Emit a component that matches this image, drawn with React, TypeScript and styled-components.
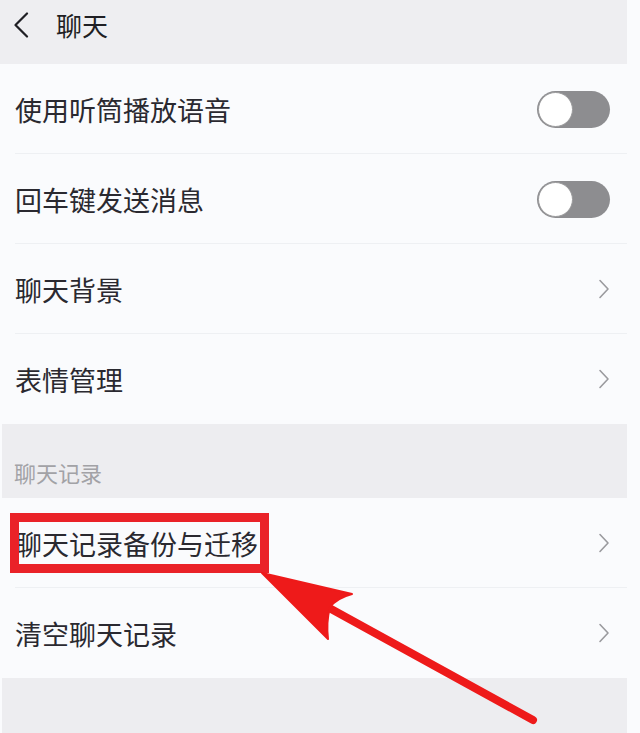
import React from "react";
import styled, {createGlobalStyle} from "styled-components";

const GlobalStyle = createGlobalStyle`
  html, body {
    margin: 0;
    padding: 0;
    background: #fafbfd;
  }
  body {
    font-family: "Noto Sans CJK SC", "Noto Sans", sans-serif;
  }
`;

const Page = styled.div`
  position: relative;
  width: 640px;
  height: 733px;
  overflow: hidden;
  background: #fafbfd;
`;

const Screen = styled.div`
  width: 627px;
  height: 733px;
  display: flex;
  flex-direction: column;
`;

const Header = styled.div`
  height: 64px;
  flex-shrink: 0;
  box-sizing: border-box;
  display: flex;
  align-items: center;
  background: #eeeef1;
  padding: 0 0 14px 13px;
  gap: 27px;
`;

const Title = styled.span`
  font-size: 26px;
  color: #1f1f24;
  line-height: 1;
`;

const Row = styled.div<{ $last?: boolean }>`
  position: relative;
  height: 90px;
  flex-shrink: 0;
  display: flex;
  align-items: center;
  justify-content: space-between;
  padding: 0 17px 0 15px;
  background: #fafbfd;
  &::after {
    content: "";
    display: ${p => (p.$last ? "none" : "block")};
    position: absolute;
    left: 15px;
    right: 0;
    bottom: 0;
    height: 1px;
    background: #eef0f3;
  }
`;

const Label = styled.span`
  font-size: 27px;
  color: #2a2930;
  line-height: 1;
`;

const Section = styled.div`
  height: 74px;
  flex-shrink: 0;
  display: flex;
  align-items: flex-end;
  padding: 0 0 15px 12px;
  background: #ededf0;
  box-sizing: border-box;
  margin-left: 2px;
`;

const SectionLabel = styled.span`
  font-size: 22px;
  color: #a2a2a6;
  line-height: 1;
`;

const Footer = styled.div`
  flex: 1;
  background: #ededf0;
  margin-left: 2px;
`;

const Track = styled.div<{ $on?: boolean }>`
  width: 73px;
  height: 37px;
  border-radius: 19px;
  background: ${p => (p.$on ? "#07c160" : "#8d8d90")};
  position: relative;
`;

const Knob = styled.div`
  position: absolute;
  left: 1px;
  top: 1px;
  width: 33px;
  height: 33px;
  border-radius: 50%;
  background: #ffffff;
  border: 1px solid #9a9a9c;
`;

const Highlight = styled.div`
  position: absolute;
  left: 10px;
  top: 15px;
  width: 259px;
  height: 60px;
  box-sizing: border-box;
  border: 9px solid #ea2228;
  pointer-events: none;
`;

const ArrowLayer = styled.svg`
  position: absolute;
  left: 0;
  top: 0;
  pointer-events: none;
`;

const Chevron = () => (
    <svg width="12" height="20" viewBox="0 0 12 20">
        <path d="M2 1.5 L10 10 L2 18.5" fill="none" stroke="#9a9a9e" strokeWidth="1.6"
              strokeLinecap="round" strokeLinejoin="round"/>
    </svg>
);

const BackIcon = () => (
    <svg width="16" height="26" viewBox="0 0 16 26">
        <path d="M14 1.5 L2.5 13 L14 24.5" fill="none" stroke="#1f1f24" strokeWidth="2.2"
              strokeLinecap="round" strokeLinejoin="round"/>
    </svg>
);

const Toggle = ({on}: { on?: boolean }) => (
    <Track $on={on}>
        <Knob/>
    </Track>
);

const App = () => {
    return (<Page>
        <GlobalStyle/>
        <Screen>
            <Header>
                <BackIcon/>
                <Title>聊天</Title>
            </Header>
            <Row>
                <Label>使用听筒播放语音</Label>
                <Toggle/>
            </Row>
            <Row>
                <Label>回车键发送消息</Label>
                <Toggle/>
            </Row>
            <Row>
                <Label>聊天背景</Label>
                <Chevron/>
            </Row>
            <Row $last>
                <Label>表情管理</Label>
                <Chevron/>
            </Row>
            <Section>
                <SectionLabel>聊天记录</SectionLabel>
            </Section>
            <Row>
                <Label>聊天记录备份与迁移</Label>
                <Chevron/>
                <Highlight/>
            </Row>
            <Row $last>
                <Label>清空聊天记录</Label>
                <Chevron/>
            </Row>
            <Footer/>
        </Screen>
        {/* red annotation arrow pointing at the highlighted row */}
        <ArrowLayer width="640" height="733" viewBox="0 0 640 733">
            <line x1="322" y1="604" x2="533" y2="720" stroke="#ee1a1a" strokeWidth="8" strokeLinecap="round"/>
            <path d="M262 573 L352 594 Q337 598 330 607 Q326 622 328 639 Z" fill="#ee1a1a"
                  stroke="#ee1a1a" strokeWidth="2" strokeLinejoin="round"/>
        </ArrowLayer>
    </Page>);
}

export default App;
